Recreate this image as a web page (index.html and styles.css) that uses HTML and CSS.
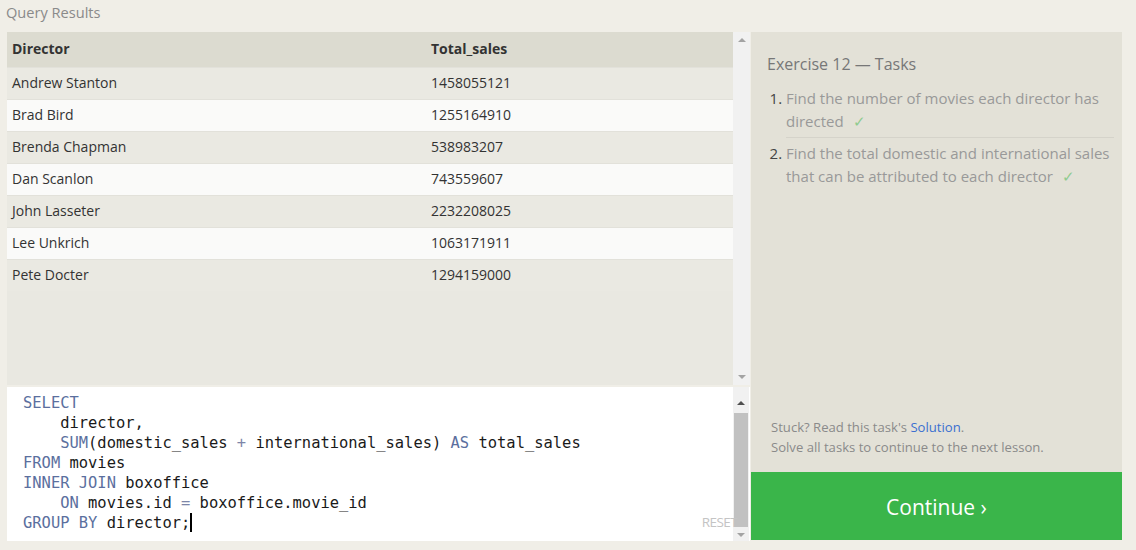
FILE: index.html
```html
<!DOCTYPE html>
<html>
<head>
<meta charset="utf-8">
<link rel="stylesheet" href="styles.css">
</head>
<body>
<div class="title">Query Results</div>
<div class="main">
  <div class="left">
    <div class="results">
      <div class="table-area">
        <table class="table">
          <thead>
            <tr><th class="c1">Director</th><th>Total_sales</th></tr>
          </thead>
          <tbody>
            <tr class="odd"><td>Andrew Stanton</td><td>1458055121</td></tr>
            <tr class="even"><td>Brad Bird</td><td>1255164910</td></tr>
            <tr class="odd"><td>Brenda Chapman</td><td>538983207</td></tr>
            <tr class="even"><td>Dan Scanlon</td><td>743559607</td></tr>
            <tr class="odd"><td>John Lasseter</td><td>2232208025</td></tr>
            <tr class="even"><td>Lee Unkrich</td><td>1063171911</td></tr>
            <tr class="odd"><td>Pete Docter</td><td>1294159000</td></tr>
          </tbody>
        </table>
      </div>
      <div class="scrollbar light">
        <span class="arrow up"></span>
        <span class="spacer"></span>
        <span class="arrow down"></span>
      </div>
    </div>
    <div class="editor">
      <div class="code"><span class="kw">SELECT</span>
    director,
    <span class="kw">SUM</span>(domestic_sales <span class="op">+</span> international_sales) <span class="kw">AS</span> total_sales
<span class="kw">FROM</span> movies
<span class="kw">INNER JOIN</span> boxoffice
    <span class="kw">ON</span> movies.id <span class="op">=</span> boxoffice.movie_id
<span class="kw">GROUP BY</span> director;<span class="cursor"></span></div>
      <div class="scrollbar editor-sb">
        <span class="arrow up dark"></span>
        <span class="thumb"></span>
        <span class="arrow down"></span>
      </div>
      <span class="reset">RESET</span>
    </div>
  </div>
  <div class="right">
    <div class="tasks">
      <h2 class="tasks-title">Exercise 12 — Tasks</h2>
      <ol class="task-list">
        <li class="task">Find the number of movies each director has directed <span class="check">✓</span></li>
        <li class="task">Find the total domestic and international sales that can be attributed to each director <span class="check">✓</span></li>
      </ol>
      <div class="help">
        <div>Stuck? Read this task's <a class="link">Solution</a>.</div>
        <div>Solve all tasks to continue to the next lesson.</div>
      </div>
    </div>
    <div class="continue">Continue ›</div>
  </div>
</div>
</body>
</html>
```
FILE: styles.css
```css
* { box-sizing: border-box; }
html, body { margin: 0; padding: 0; }
body {
  width: 1136px;
  height: 550px;
  background: #f0eee7;
  font-family: "Open Sans", "Liberation Sans", sans-serif;
  overflow: hidden;
}
.title {
  height: 32px;
  padding: 2px 0 0 6px;
  font-size: 14.6px;
  color: #8a8a8a;
}
.main {
  display: flex;
  padding-left: 7px;
}
.left {
  width: 743px;
  display: flex;
  flex-direction: column;
}
.results {
  height: 353px;
  display: flex;
  background: #e9e8e1;
}
.table-area {
  width: 726px;
}
.table {
  width: 100%;
  border-collapse: collapse;
  font-size: 14px;
  color: #333;
}
.table th {
  text-align: left;
  font-weight: 700;
  background: #dcdbd0;
  height: 35px;
  padding: 0 5px 1px;
  color: #333;
}
.table th.c1 { width: 419px; }
.table td {
  height: 32px;
  padding: 0 5px 2px;
  border-top: 1px solid #e2e1da;
}
.odd td { background: #eae9e2; }
.even td { background: #fafaf9; }
.scrollbar {
  width: 17px;
  display: flex;
  flex-direction: column;
  align-items: center;
  background: #f1f1f1;
}
.arrow {
  width: 0;
  height: 0;
  border-left: 4px solid transparent;
  border-right: 4px solid transparent;
  margin: 6px 0;
}
.arrow.up { border-bottom: 4px solid #a3a3a3; }
.arrow.up.dark { border-bottom-color: #505050; }
.arrow.down { border-top: 4px solid #a3a3a3; }
.spacer { flex: 1; }
.editor {
  margin-top: 2px;
  height: 154px;
  background: #fff;
  display: flex;
  position: relative;
}
.code {
  flex: 1;
  white-space: pre;
  font-family: "DejaVu Sans Mono", "Liberation Mono", monospace;
  font-size: 15.45px;
  line-height: 20px;
  padding: 6px 0 0 16px;
  color: #1a1a1a;
}
.kw { color: #5b6f9e; }
.op { color: #7d86a8; }
.cursor {
  display: inline-block;
  width: 2px;
  height: 19px;
  background: #000;
  vertical-align: -4px;
}
.reset {
  position: absolute;
  z-index: 1;
  right: 13px;
  bottom: 10px;
  font-size: 13.5px;
  color: #c4c4c4;
  letter-spacing: -0.6px;
}
.editor-sb {
  width: 16px;
  margin-right: 1px;
  padding-top: 10px;
}
.editor-sb .arrow { margin: 4px 0; }
.thumb {
  width: 14px;
  flex: 1;
  background: #c1c1c1;
  margin: 4px 0 2px;
}
.right {
  width: 371px;
  margin-left: 1px;
  height: 508px;
  display: flex;
  flex-direction: column;
}
.tasks {
  flex: 1;
  background: #e3e1d7;
  padding: 21px 8px 0 16px;
  display: flex;
  flex-direction: column;
}
.tasks-title {
  margin: 0 0 12px 0;
  font-weight: 400;
  font-size: 16px;
  color: #777;
}
.task-list {
  margin: 0;
  padding: 0 0 0 19px;
  font-size: 15px;
  line-height: 23px;
  color: #999;
}
.task {
  padding: 0 0 4px 0;
  margin-bottom: 4px;
  border-bottom: 1px solid #d5d3ca;
}
.task:last-child { border-bottom: none; }
.task::marker { color: #444; }
.check {
  color: #8fcb8f;
  margin-left: 5px;
}
.help {
  margin-top: auto;
  padding: 0 0 15px 4px;
  font-size: 13.1px;
  line-height: 20px;
  color: #8a8a8a;
}
.link { color: #3a6fd0; }
.continue {
  height: 68px;
  background: #3ab54a;
  color: #fff;
  font-size: 21px;
  padding-top: 2px;
  display: flex;
  align-items: center;
  justify-content: center;
}
```
